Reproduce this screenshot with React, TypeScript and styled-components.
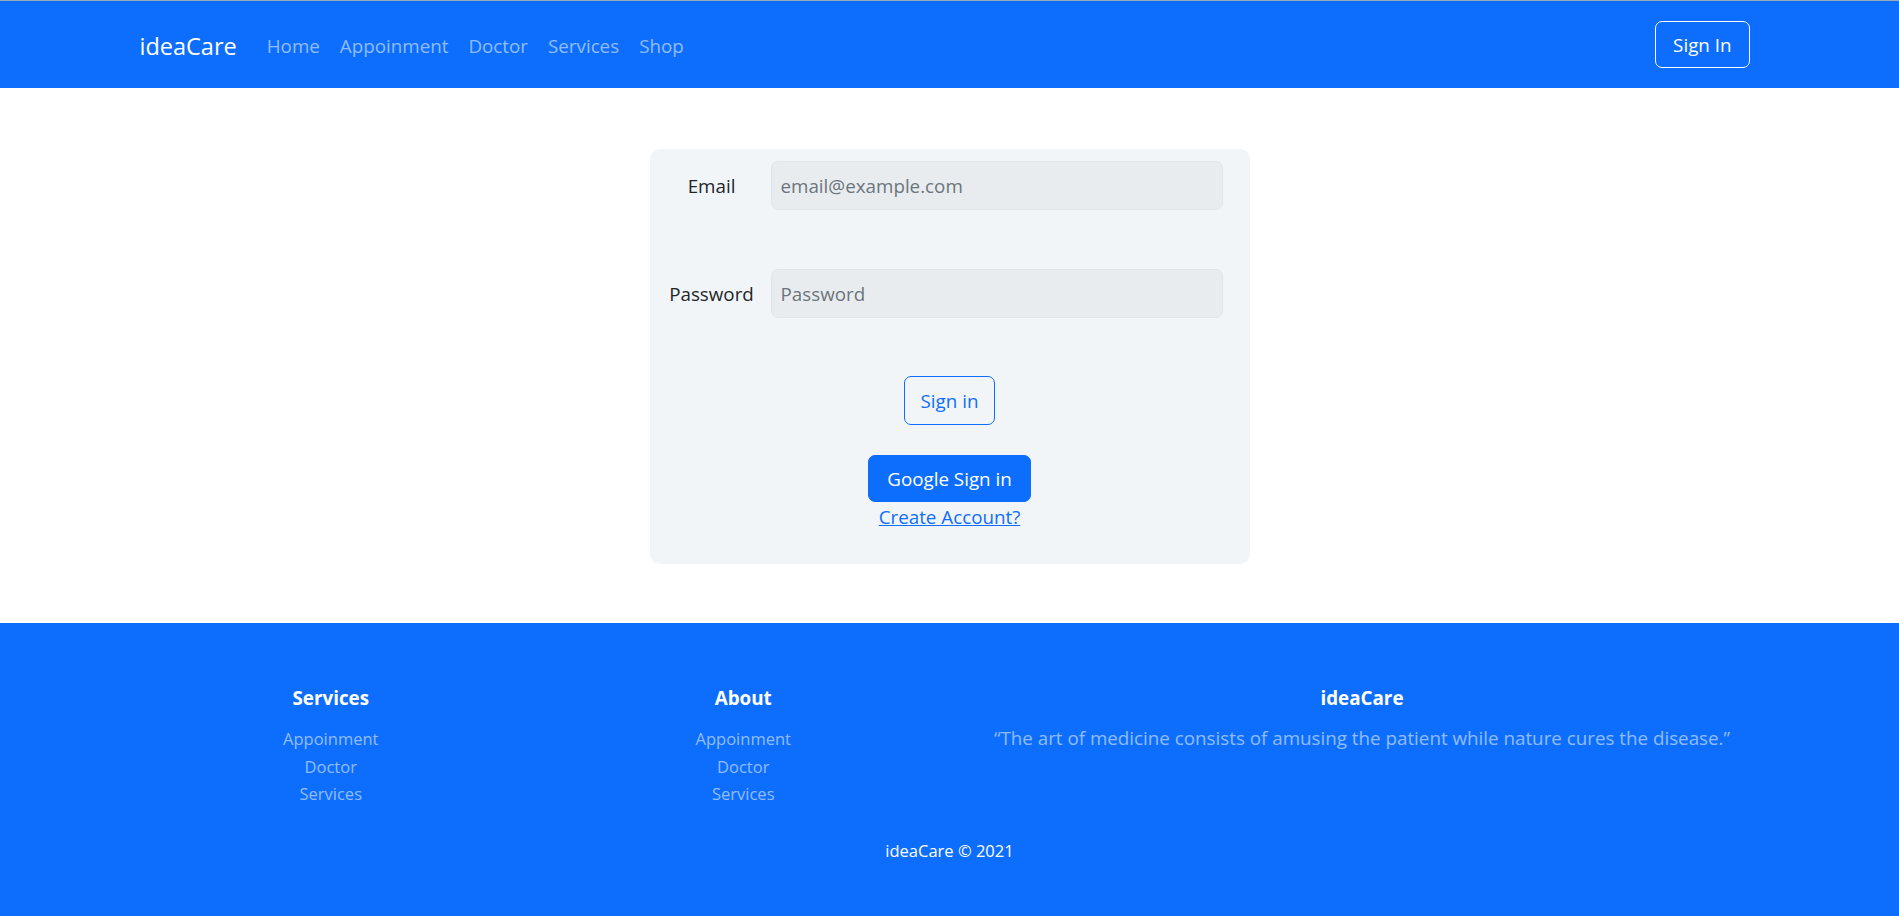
import React from "react";
import styled, { createGlobalStyle } from "styled-components";

const GlobalStyle = createGlobalStyle`
  html, body {
    margin: 0;
    padding: 0;
    background: #ffffff;
  }
  body {
    font-family: "Open Sans", "Noto Sans", Arial, sans-serif;
    color: #212529;
  }
  * { box-sizing: border-box; }
`;

const BLUE = "#0d6efd";
const MUTED_ON_BLUE = "rgba(255, 255, 255, 0.55)";

const TopEdge = styled.div`
  height: 1px;
  background: #9aabb8;
`;

const Navbar = styled.nav`
  height: 87px;
  background: ${BLUE};
`;

const NavContainer = styled.div`
  max-width: 1650px;
  height: 100%;
  margin: 0 auto;
  padding: 0 25px 0 15px;
  display: flex;
  align-items: center;
`;

const Brand = styled.a`
  font-size: 23.5px;
  color: #ffffff;
  margin-right: 20px;
  padding-top: 4px;
  text-decoration: none;
  line-height: 1.5;
`;

const NavList = styled.div`
  display: flex;
  align-items: center;
  padding-top: 4px;
`;

const NavLink = styled.a`
  font-size: 18.8px;
  color: ${MUTED_ON_BLUE};
  padding: 0 10px;
  text-decoration: none;
  line-height: 1.5;
`;

const NavButton = styled.button`
  margin-left: auto;
  height: 47px;
  padding: 0 17px;
  border: 1px solid #ffffff;
  border-radius: 7px;
  background: transparent;
  color: #ffffff;
  font-family: inherit;
  font-size: 18.8px;
`;

const Main = styled.main`
  padding: 61px 0 59px;
  display: flex;
  justify-content: center;
`;

const Card = styled.form`
  width: 600px;
  background: #f2f5f7;
  border-radius: 10px;
  padding: 12px 27px 32px 12px;
  display: flex;
  flex-direction: column;
`;

const FieldRow = styled.div<{ $gap?: number }>`
  display: grid;
  grid-template-columns: 100px 452px;
  column-gap: 9px;
  align-items: center;
  margin-bottom: ${(p) => p.$gap ?? 0}px;
`;

const Label = styled.label`
  font-size: 18.8px;
  text-align: center;
  color: #212529;
  white-space: nowrap;
`;

const Input = styled.input`
  height: 49px;
  width: 100%;
  padding: 0 9px;
  border: 1px solid #e2e6ea;
  border-radius: 7px;
  background: #e9ecef;
  font-family: inherit;
  font-size: 18.8px;
  color: #212529;
  outline: none;
  &::placeholder {
    color: #6c757d;
  }
`;

const Actions = styled.div`
  display: flex;
  flex-direction: column;
  align-items: center;
  padding-left: 15px;
`;

const Button = styled.button<{ $variant: "outline" | "solid" }>`
  height: ${(p) => (p.$variant === "outline" ? 49 : 47)}px;
  padding: 0 ${(p) => (p.$variant === "outline" ? 16 : 18)}px;
  border: 1px solid ${BLUE};
  border-radius: 7px;
  background: ${(p) => (p.$variant === "outline" ? "transparent" : BLUE)};
  color: ${(p) => (p.$variant === "outline" ? BLUE : "#ffffff")};
  font-family: inherit;
  font-size: 18.8px;
  margin-bottom: ${(p) => (p.$variant === "outline" ? 30 : 0)}px;
`;

const LinkText = styled.a`
  font-size: 18.8px;
  line-height: 30px;
  color: ${BLUE};
  text-decoration: underline;
`;

const Footer = styled.footer`
  background: ${BLUE};
  padding: 63px 0 53px;
`;

const FooterGrid = styled.div`
  max-width: 1650px;
  margin: 0 auto;
  display: grid;
  grid-template-columns: 1fr 1fr 2fr;
`;

const FooterCol = styled.div`
  display: flex;
  flex-direction: column;
  align-items: center;
  text-align: center;
`;

const FooterHeading = styled.h5`
  margin: 0 0 15px;
  font-size: 18.8px;
  font-weight: 700;
  line-height: 24px;
  color: #ffffff;
`;

const FooterLink = styled.a`
  font-size: 16.5px;
  line-height: 27.5px;
  color: ${MUTED_ON_BLUE};
  text-decoration: none;
`;

const Quote = styled.p`
  margin: 0;
  font-size: 18.8px;
  line-height: 27.5px;
  color: ${MUTED_ON_BLUE};
`;

const Copyright = styled.p`
  margin: 30px 0 0;
  text-align: center;
  font-size: 16.5px;
  line-height: 26px;
  color: #ffffff;
`;

const navItems = ["Home", "Appoinment", "Doctor", "Services", "Shop"];
const footerLinks = ["Appoinment", "Doctor", "Services"];

export default function App() {
  return (
    <>
      <GlobalStyle />
      <TopEdge />
      <Navbar>
        <NavContainer>
          <Brand href="#">ideaCare</Brand>
          <NavList>
            {navItems.map((item) => (
              <NavLink key={item} href="#">
                {item}
              </NavLink>
            ))}
          </NavList>
          <NavButton type="button">Sign In</NavButton>
        </NavContainer>
      </Navbar>
      <Main>
        <Card onSubmit={(e) => e.preventDefault()}>
          <FieldRow $gap={59}>
            <Label htmlFor="email">Email</Label>
            <Input id="email" type="email" placeholder="email@example.com" />
          </FieldRow>
          <FieldRow $gap={58}>
            <Label htmlFor="password">Password</Label>
            <Input id="password" type="password" placeholder="Password" />
          </FieldRow>
          <Actions>
            <Button type="submit" $variant="outline">
              Sign in
            </Button>
            <Button type="button" $variant="solid">
              Google Sign in
            </Button>
            <LinkText href="#">Create Account?</LinkText>
          </Actions>
        </Card>
      </Main>
      <Footer>
        <FooterGrid>
          <FooterCol>
            <FooterHeading>Services</FooterHeading>
            {footerLinks.map((l) => (
              <FooterLink key={l} href="#">
                {l}
              </FooterLink>
            ))}
          </FooterCol>
          <FooterCol>
            <FooterHeading>About</FooterHeading>
            {footerLinks.map((l) => (
              <FooterLink key={l} href="#">
                {l}
              </FooterLink>
            ))}
          </FooterCol>
          <FooterCol>
            <FooterHeading>ideaCare</FooterHeading>
            <Quote>
              “The art of medicine consists of amusing the patient while nature
              cures the disease.”
            </Quote>
          </FooterCol>
        </FooterGrid>
        <Copyright>ideaCare © 2021</Copyright>
      </Footer>
    </>
  );
}
